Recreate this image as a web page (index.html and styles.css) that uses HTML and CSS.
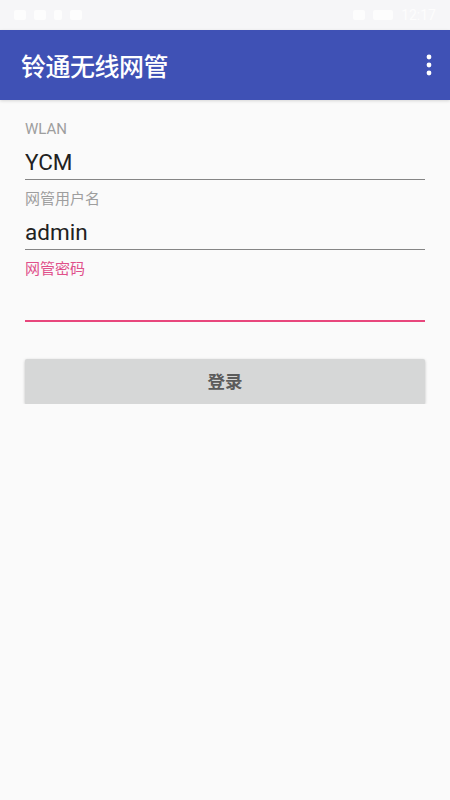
FILE: index.html
```html
<!DOCTYPE html>
<html lang="zh-CN">
<head>
    <meta charset="UTF-8">
    <meta name="viewport" content="width=device-width, initial-scale=1.0">
    <title>铃通无线网管</title>
    <link rel="stylesheet" href="styles.css">
</head>
<body>
    <div class="status-bar">
        <div class="status-left">
            <span class="sb-icon"></span>
            <span class="sb-icon"></span>
            <span class="sb-icon small"></span>
            <span class="sb-icon"></span>
        </div>
        <div class="status-right">
            <span class="sb-icon"></span>
            <span class="sb-icon wide"></span>
            <span class="sb-time">12:17</span>
        </div>
    </div>

    <header class="toolbar">
        <h1 class="toolbar-title">铃通无线网管</h1>
        <button class="menu-btn" aria-label="更多">
            <svg width="6" height="22" viewBox="0 0 6 22">
                <circle cx="3" cy="3" r="2.4" fill="#fff"/>
                <circle cx="3" cy="11" r="2.4" fill="#fff"/>
                <circle cx="3" cy="19" r="2.4" fill="#fff"/>
            </svg>
        </button>
    </header>

    <main class="content">
        <div class="field">
            <label for="wlan">WLAN</label>
            <input type="text" id="wlan" value="YCM">
        </div>

        <div class="field">
            <label for="usuario">网管用户名</label>
            <input type="text" id="usuario" value="admin">
        </div>

        <div class="field focused">
            <label for="clave">网管密码</label>
            <input type="password" id="clave">
        </div>

        <button class="login-btn">登录</button>
    </main>
</body>
</html>
```

FILE: styles.css
```css
body {
    margin: 0;
    background-color: #fafafa;
    font-family: Roboto, "Noto Sans CJK SC", sans-serif;
}
.status-bar {
    height: 30px;
    background-color: #f6f6f8;
    display: flex;
    justify-content: space-between;
    align-items: center;
    padding: 0 14px;
}
.status-left, .status-right {
    display: flex;
    align-items: center;
    gap: 8px;
}
.sb-icon {
    width: 12px;
    height: 10px;
    background-color: #fdfdfd;
    border-radius: 2px;
}
.sb-icon.small {
    width: 8px;
}
.sb-icon.wide {
    width: 20px;
}
.sb-time {
    color: #fdfdfd;
    font-size: 14px;
}
.toolbar {
    height: 70px;
    background-color: #3f51b5;
    display: flex;
    align-items: center;
    justify-content: space-between;
    padding: 0 14px 0 21px;
    box-shadow: 0 1px 3px rgba(0, 0, 0, 0.15);
}
.toolbar-title {
    margin: 0;
    color: #fff;
    font-size: 25px;
    font-weight: 500;
    letter-spacing: -0.5px;
}
.menu-btn {
    background: none;
    border: none;
    padding: 4px;
    display: flex;
}
.content {
    padding: 21px 25px 0;
}
.field {
    margin-bottom: 11px;
}
.field label {
    display: block;
    height: 16px;
    line-height: 16px;
    font-size: 15px;
    color: #9e9e9e;
}
.field input {
    display: block;
    width: 100%;
    height: 43px;
    box-sizing: border-box;
    padding: 8px 0 0;
    border: none;
    border-bottom: 1.5px solid #858585;
    background: transparent;
    font-family: Roboto, "Noto Sans CJK SC", sans-serif;
    font-size: 22.5px;
    color: #212121;
    outline: none;
}
.field.focused label {
    color: #e0508a;
}
.field.focused input {
    height: 45px;
    border-bottom: 2.5px solid #e8467c;
}
.login-btn {
    display: block;
    width: 100%;
    height: 45px;
    margin-top: 37px;
    padding: 0 0 2px;
    border: none;
    border-radius: 2px;
    background-color: #d6d7d7;
    box-shadow: 0 1px 3px rgba(0, 0, 0, 0.25);
    font-family: Roboto, "Noto Sans CJK SC", sans-serif;
    font-size: 17.5px;
    font-weight: bold;
    color: #5b5b5b;
}
```
